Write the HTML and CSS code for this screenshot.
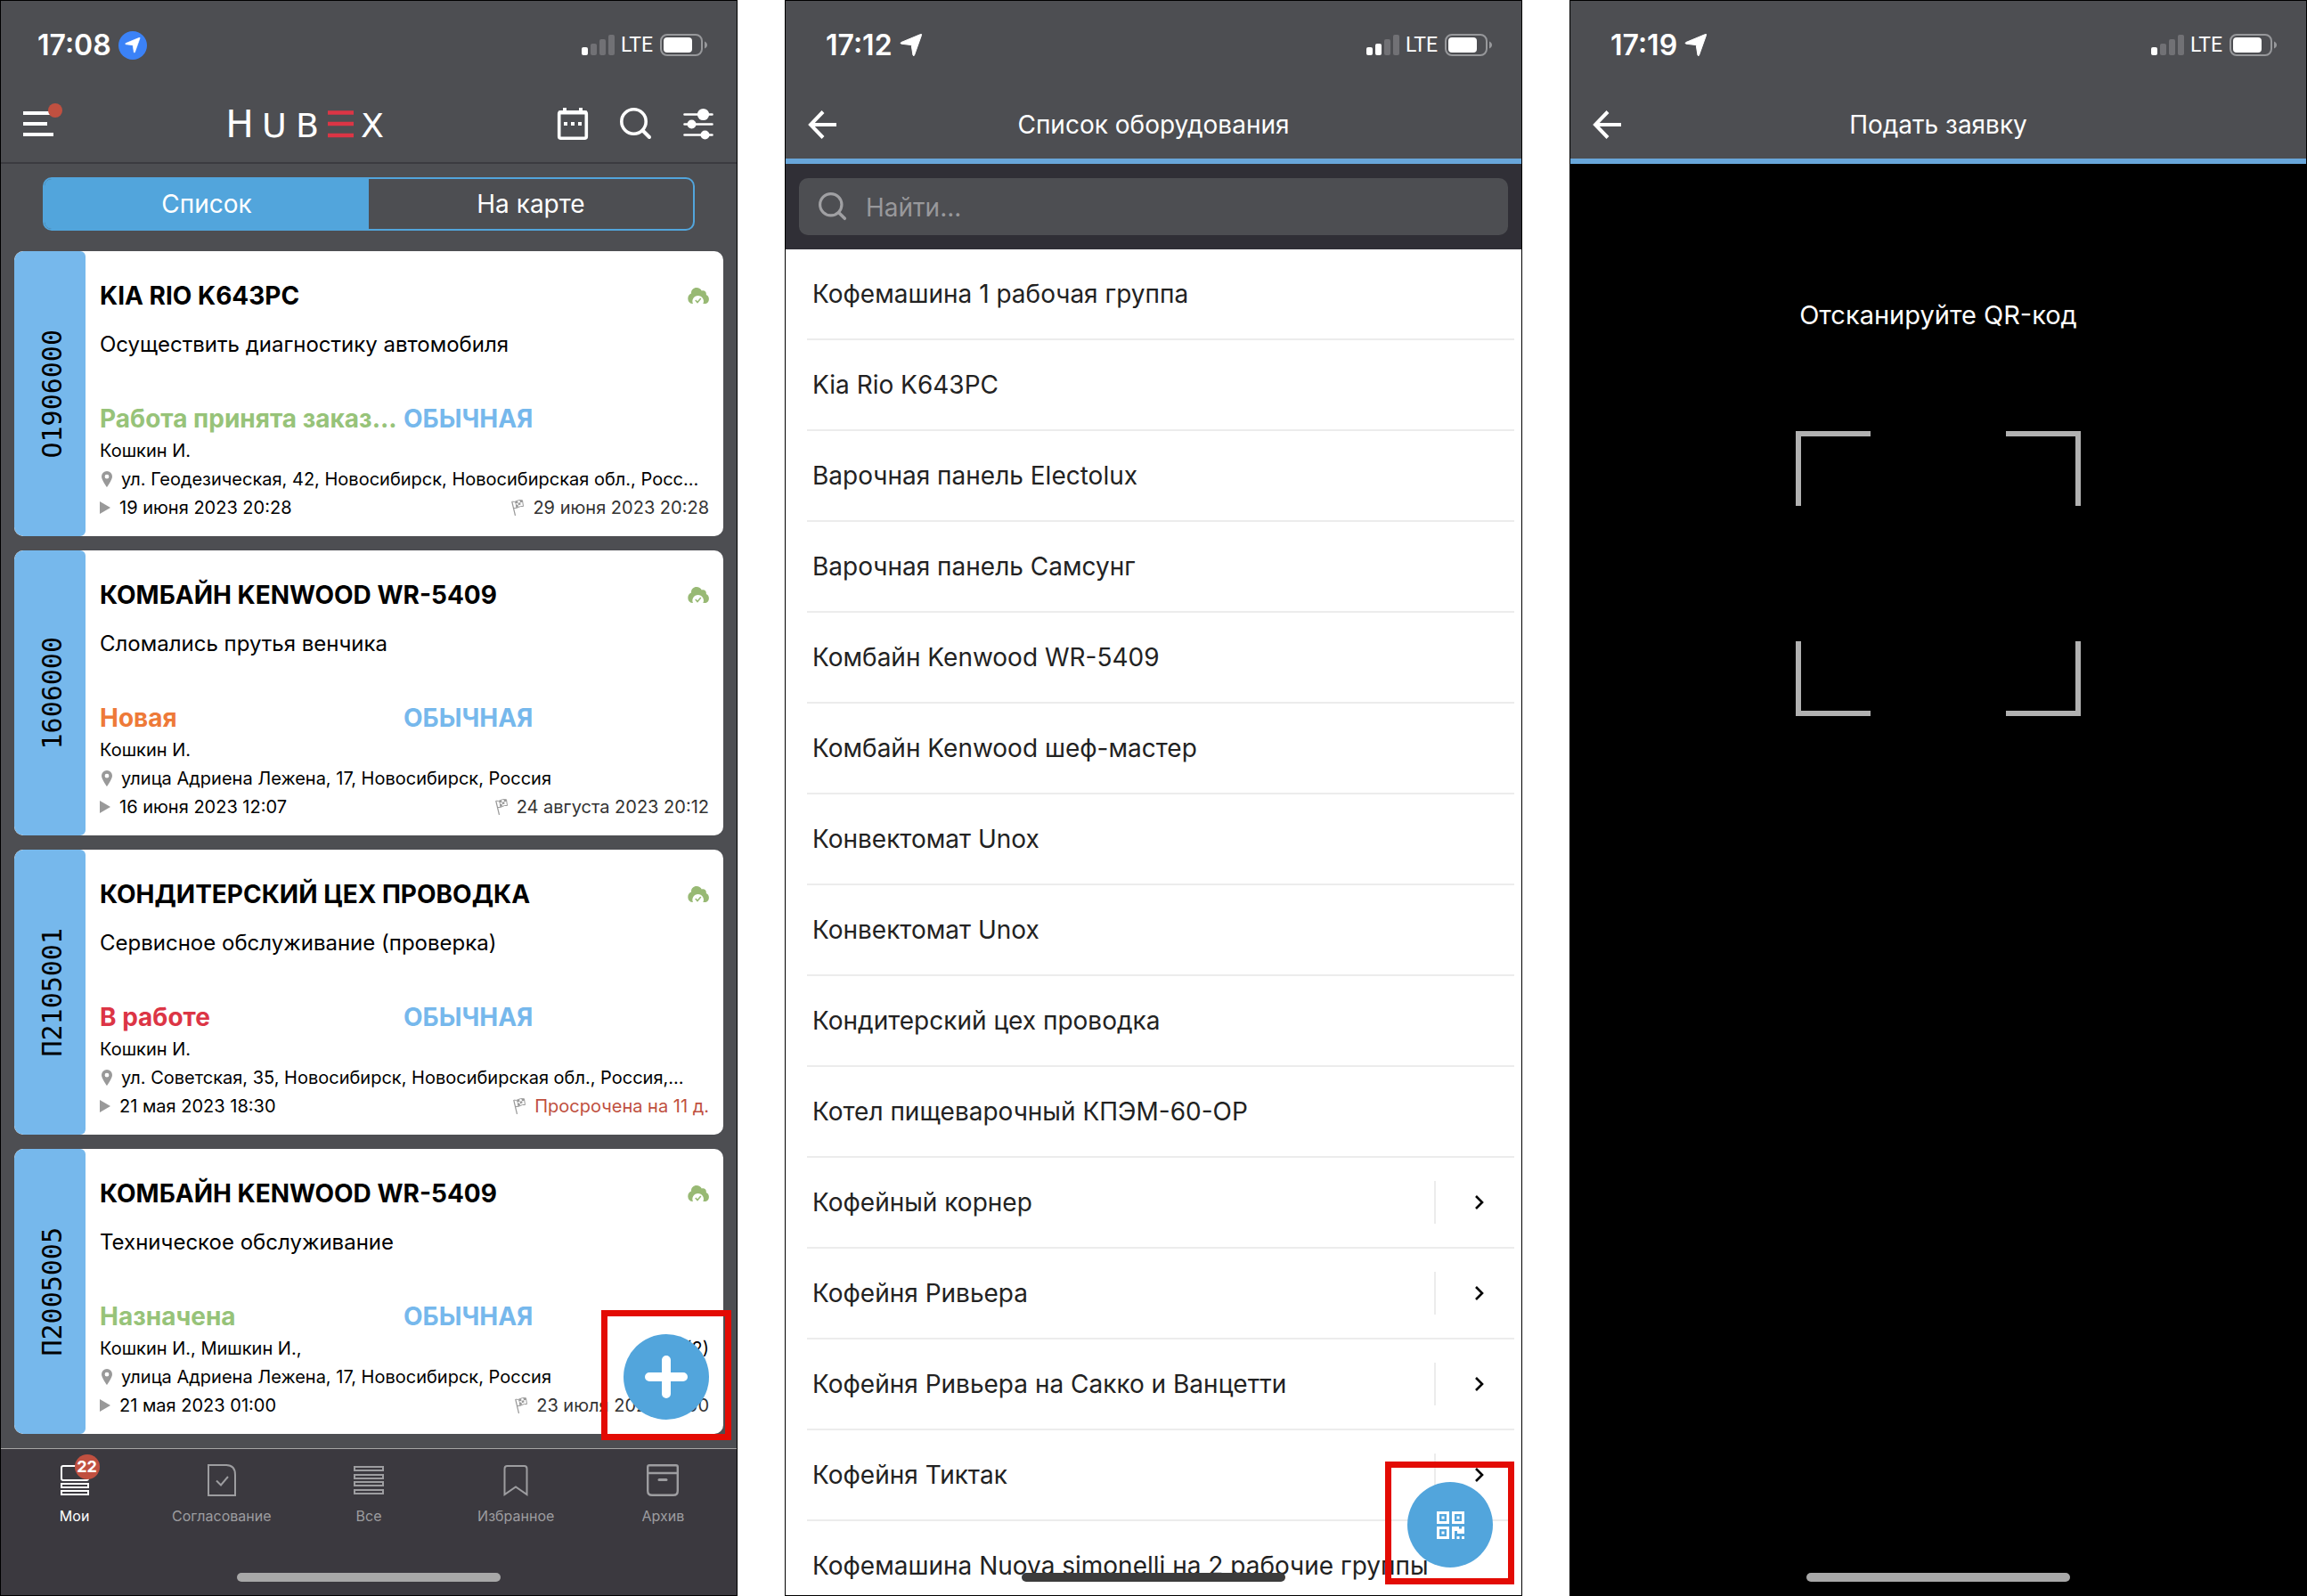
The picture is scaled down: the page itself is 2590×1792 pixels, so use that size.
FILE: index.html
```html
<!DOCTYPE html>
<html lang="ru">
<head>
<meta charset="utf-8">
<meta name="viewport" content="width=device-width, initial-scale=1">
<title>HubEx</title>
<link rel="stylesheet" href="styles.css">
</head>
<body>
<svg class="sprite" aria-hidden="true">
  <symbol id="i-arrow" viewBox="0 0 26 26"><path d="M24.500 1.500L16.500 24Q15.800 25.600 15 24L13.300 13.200Q13.200 12.600 12.600 12.500L2 11.200Q0 10.400 1.800 9.500L22.800 .8Q25.500 -.2 24.500 1.500Z" fill="currentColor" stroke="currentColor"/></symbol>
  <symbol id="i-battery" viewBox="0 0 54 26"><rect x="1" y="1" width="46" height="23" rx="7" fill="none" stroke="#97989b" stroke-width="2"/><rect x="4" y="4" width="32" height="17" rx="4" fill="#fff"/><path d="M50 8.500c4 1.500 4 6.500 0 8z" fill="#97989b"/></symbol>
  <symbol id="i-back" viewBox="0 0 32 32"><path d="M17 1.500L3 16l14 14.500M3 16h29" fill="none" stroke="currentColor" stroke-width="4"/></symbol>
  <symbol id="i-search" viewBox="0 0 36 36"><circle cx="15.500" cy="15.500" r="13.700" fill="none" stroke="currentColor" stroke-width="3.600"/><path d="M25.500 25.500l7.500 7.500" stroke="currentColor" stroke-width="4" stroke-linecap="round"/></symbol>
  <symbol id="i-cloud" viewBox="0 0 24 18"><path d="M6 18A5.500 5.500 0 0 1 .3 12.400C.2 9.500 2 7.300 4 6.600 3.600 2.800 6.400 0 10 0c2.600 0 4.700 1.400 5.800 3.500C18.400 2.400 21.500 4.400 20.800 8 22.800 8.800 24 10.600 23.900 13c0 2.500-1.400 4.300-3.400 5h-3.200a6.300 6.300 0 1 0-11.300 0z" fill="#98b974"/><path d="M8.800 14l2.200 2.500 3.800-4.500" fill="none" stroke="#98b974" stroke-width="1.600"/></symbol>
  <symbol id="i-pin" viewBox="0 0 12 18"><path d="M6 0a6 6 0 0 1 6 6c0 4-6 12-6 12S0 10 0 6a6 6 0 0 1 6-6zm0 3.800a2.400 2.400 0 1 0 0 4.800 2.400 2.400 0 0 0 0-4.800z" fill="#999"/></symbol>
  <symbol id="i-play" viewBox="0 0 12 14"><path d="M0 0l12 7-12 7z" fill="#999"/></symbol>
  <symbol id="i-flag" viewBox="0 0 14 18"><path d="M.7 2L4.500 18" stroke="#999" stroke-width="1.200"/><path d="M1.200 2.200Q4 3 6 1.500T12.500.8L13.500 7.500Q10 7 8 8.500T3 9.500" fill="none" stroke="#999"/><path d="M4 2.500l3-1 .5 2.300-3 .9zM9.500 1l3-.2.4 2-2.800.5zM7.500 3.800l2.600-.6.5 2.400-2.600.6zM4.800 5l2.700 1 .5 2.300-2.700.9z" fill="#999"/></symbol>
</svg>

<main class="board">
  <section class="phone phone--tasks">
    <div class="status">
      <span class="time">17:08</span>
      <span class="geo-badge"><svg width="18" height="18"><use href="#i-arrow"/></svg></span>
      <span class="signal"><i class="on"></i><i></i><i></i><i></i></span>
      <span class="lte">LTE</span>
      <svg class="battery" width="54" height="26"><use href="#i-battery"/></svg>
    </div>
    <header class="top top--main">
      <button class="icon-btn menu-btn" aria-label="Меню">
        <svg width="46" height="40" viewBox="0 0 46 40"><path d="M0 12h34M0 24h27M0 36h34" stroke="#fff" stroke-width="4"/><circle cx="36" cy="9" r="8" fill="#c05040"/></svg>
      </button>
      <svg class="logo" width="188" height="60" viewBox="-2 -12 188 60" role="img" aria-label="HubEx">
        <g class="logo-text" text-anchor="middle"><text class="logo-cap" x="17" y="33">H</text><text x="56" y="33">U</text><text x="93" y="33">B</text><text x="166" y="33">X</text></g>
        <path d="M116 5.500h29M116 18h29M116 31h29" stroke="#dc3545" stroke-width="4.600"/>
      </svg>
      <div class="tools">
        <button class="icon-btn" aria-label="Календарь"><svg width="36" height="38" viewBox="0 0 36 38"><rect x="2.700" y="5.700" width="30.600" height="29.600" rx="2" fill="none" stroke="#fff" stroke-width="3.600"/><path d="M9 1v5M27 1v5" stroke="#fff" stroke-width="4"/><path d="M2 6.500h32" stroke="#fff" stroke-width="4"/><path d="M8 19h4M16 19h4M24 19h4" stroke="#fff" stroke-width="4"/></svg></button>
        <button class="icon-btn" aria-label="Поиск"><svg width="36" height="36"><use href="#i-search"/></svg></button>
        <button class="icon-btn" aria-label="Фильтр"><svg width="34" height="36" viewBox="0 0 34 36"><path d="M1.500 7.500h31M1.500 18.500h31M1.500 30.500h31" stroke="#fff" stroke-width="2.600" stroke-linecap="round"/><g fill="#fff"><circle cx="22.500" cy="7.500" r="6.600"/><circle cx="9.500" cy="18.500" r="5"/><circle cx="24.500" cy="30.500" r="5"/></g></svg></button>
      </div>
    </header>
    <div class="tasks">
      <div class="segmented">
        <button class="seg seg--on">Список</button>
        <button class="seg">На карте</button>
      </div>
      <article class="card">
        <div class="card-id"><span>О1906000</span></div>
        <div class="card-body">
          <div class="card-head"><h2>KIA RIO K643PC</h2><svg width="24" height="18"><use href="#i-cloud"/></svg></div>
          <p class="desc">Осуществить диагностику автомобиля</p>
          <div class="state"><span class="green">Работа принята заказ...</span><span class="kind">ОБЫЧНАЯ</span></div>
          <div class="line"><span>Кошкин И.</span></div>
          <div class="line line--place"><svg width="12" height="18"><use href="#i-pin"/></svg><span>ул. Геодезическая, 42, Новосибирск, Новосибирская обл., Росс...</span></div>
          <div class="line line--dates"><svg width="12" height="14"><use href="#i-play"/></svg><span>19 июня 2023 20:28</span><span class="due"><svg width="14" height="18"><use href="#i-flag"/></svg>29 июня 2023 20:28</span></div>
        </div>
      </article>
      <article class="card">
        <div class="card-id"><span>1606000</span></div>
        <div class="card-body">
          <div class="card-head"><h2>КОМБАЙН KENWOOD WR-5409</h2><svg width="24" height="18"><use href="#i-cloud"/></svg></div>
          <p class="desc">Сломались прутья венчика</p>
          <div class="state"><span class="orange">Новая</span><span class="kind">ОБЫЧНАЯ</span></div>
          <div class="line"><span>Кошкин И.</span></div>
          <div class="line line--place"><svg width="12" height="18"><use href="#i-pin"/></svg><span>улица Адриена Лежена, 17, Новосибирск, Россия</span></div>
          <div class="line line--dates"><svg width="12" height="14"><use href="#i-play"/></svg><span>16 июня 2023 12:07</span><span class="due"><svg width="14" height="18"><use href="#i-flag"/></svg>24 августа 2023 20:12</span></div>
        </div>
      </article>
      <article class="card">
        <div class="card-id"><span>П2105001</span></div>
        <div class="card-body">
          <div class="card-head"><h2>КОНДИТЕРСКИЙ ЦЕХ ПРОВОДКА</h2><svg width="24" height="18"><use href="#i-cloud"/></svg></div>
          <p class="desc">Сервисное обслуживание (проверка)</p>
          <div class="state"><span class="red">В работе</span><span class="kind">ОБЫЧНАЯ</span></div>
          <div class="line"><span>Кошкин И.</span></div>
          <div class="line line--place"><svg width="12" height="18"><use href="#i-pin"/></svg><span>ул. Советская, 35, Новосибирск, Новосибирская обл., Россия,...</span></div>
          <div class="line line--dates"><svg width="12" height="14"><use href="#i-play"/></svg><span>21 мая 2023 18:30</span><span class="due due--late"><svg width="14" height="18"><use href="#i-flag"/></svg>Просрочена на 11 д.</span></div>
        </div>
      </article>
      <article class="card">
        <div class="card-id"><span>П2005005</span></div>
        <div class="card-body">
          <div class="card-head"><h2>КОМБАЙН KENWOOD WR-5409</h2><svg width="24" height="18"><use href="#i-cloud"/></svg></div>
          <p class="desc">Техническое обслуживание</p>
          <div class="state"><span class="green">Назначена</span><span class="kind">ОБЫЧНАЯ</span></div>
          <div class="line"><span>Кошкин И., Мишкин И.,</span><span class="more">(2)</span></div>
          <div class="line line--place"><svg width="12" height="18"><use href="#i-pin"/></svg><span>улица Адриена Лежена, 17, Новосибирск, Россия</span></div>
          <div class="line line--dates"><svg width="12" height="14"><use href="#i-play"/></svg><span>21 мая 2023 01:00</span><span class="due"><svg width="14" height="18"><use href="#i-flag"/></svg>23 июля 2023 01:00</span></div>
        </div>
      </article>
    </div>
    <nav class="tabs">
      <div class="tab-row">
        <a class="tab tab--on" href="#mine"><span class="tab-icon"><svg width="36" height="36" viewBox="0 0 36 36" fill="none" stroke="currentColor" stroke-width="2"><rect x="3" y="2" width="30" height="16" rx="2"/><path d="M3 22h30v4H3zM3 30h30v4H3z"/></svg><b class="badge">22</b></span>Мои</a>
        <a class="tab" href="#approve"><svg width="36" height="36" viewBox="0 0 36 36" fill="none" stroke="currentColor" stroke-width="2"><path d="M3 1h20q10 0 10 11v23H3z"/><path d="M12 18.500l5 5 8-9.500"/></svg>Согласование</a>
        <a class="tab" href="#all"><svg width="36" height="36" viewBox="0 0 36 36" fill="none" stroke="currentColor" stroke-width="2"><path d="M2 3h32v4H2zM2 12h32v4H2zM2 20h32v4H2zM2 29h32v4H2z"/></svg>Все</a>
        <a class="tab" href="#favorites"><svg width="36" height="36" viewBox="0 0 36 36" fill="none" stroke="currentColor" stroke-width="2"><path d="M5.500 34V5q0-3 3-3h19q3 0 3 3v29L18 25.500z"/></svg>Избранное</a>
        <a class="tab" href="#archive"><svg width="36" height="36" viewBox="0 0 36 36" fill="none" stroke="currentColor" stroke-width="2.400"><path d="M1.200 10V3q0-1.800 1.800-1.800h30q1.800 0 1.800 1.800v7zM1.200 10v20q0 4.800 4.800 4.800h24q4.800 0 4.800-4.800V10"/><path d="M14 17.500h8" stroke-width="3" stroke-linecap="round"/></svg>Архив</a>
      </div>
    </nav>
    <span class="home home--light"></span>
    <div class="mark mark--add"><button class="fab" aria-label="Добавить"><svg width="48" height="48" viewBox="0 0 48 48"><path d="M24 5v38M5 24h38" stroke="#fff" stroke-width="10" stroke-linecap="round"/></svg></button></div>
  </section>

  <section class="phone phone--list">
    <div class="status">
      <span class="time">17:12</span>
      <svg class="geo" width="26" height="26"><use href="#i-arrow"/></svg>
      <span class="signal"><i class="on"></i><i class="on"></i><i></i><i></i></span>
      <span class="lte">LTE</span>
      <svg class="battery" width="54" height="26"><use href="#i-battery"/></svg>
    </div>
    <header class="top top--page">
      <button class="icon-btn" aria-label="Назад"><svg width="32" height="32"><use href="#i-back"/></svg></button>
      <h1>Список оборудования</h1>
    </header>
    <div class="search">
      <label class="search-box"><svg width="32" height="32"><use href="#i-search"/></svg><input type="search" placeholder="Найти..." aria-label="Найти"></label>
    </div>
    <ul class="items">
      <li><a href="#1">Кофемашина 1 рабочая группа</a></li>
      <li><a href="#2">Kia Rio K643PC</a></li>
      <li><a href="#3">Варочная панель Electolux</a></li>
      <li><a href="#4">Варочная панель Самсунг</a></li>
      <li><a href="#5">Комбайн Kenwood WR-5409</a></li>
      <li><a href="#6">Комбайн Kenwood шеф-мастер</a></li>
      <li><a href="#7">Конвектомат Unox</a></li>
      <li><a href="#8">Конвектомат Unox</a></li>
      <li><a href="#9">Кондитерский цех проводка</a></li>
      <li><a href="#10">Котел пищеварочный КПЭМ-60-ОР</a></li>
      <li><a href="#11">Кофейный корнер</a><button class="open" aria-label="Открыть"><svg width="10" height="16" viewBox="0 0 10 16"><path d="M1 1l7 7-7 7" fill="none" stroke="#000" stroke-width="2.600"/></svg></button></li>
      <li><a href="#12">Кофейня Ривьера</a><button class="open" aria-label="Открыть"><svg width="10" height="16" viewBox="0 0 10 16"><path d="M1 1l7 7-7 7" fill="none" stroke="#000" stroke-width="2.600"/></svg></button></li>
      <li><a href="#13">Кофейня Ривьера на Сакко и Ванцетти</a><button class="open" aria-label="Открыть"><svg width="10" height="16" viewBox="0 0 10 16"><path d="M1 1l7 7-7 7" fill="none" stroke="#000" stroke-width="2.600"/></svg></button></li>
      <li><a href="#14">Кофейня Тиктак</a><button class="open" aria-label="Открыть"><svg width="10" height="16" viewBox="0 0 10 16"><path d="M1 1l7 7-7 7" fill="none" stroke="#000" stroke-width="2.600"/></svg></button></li>
      <li><a href="#15">Кофемашина Nuova simonelli на 2 рабочие группы</a></li>
    </ul>
    <span class="home home--dark"></span>
    <div class="mark mark--qr"><button class="fab" aria-label="Сканировать QR-код"><svg width="31" height="31" viewBox="0 0 31 31"><g fill="none" stroke="#fff" stroke-width="3"><path d="M1.500 1.500h11v11h-11zM18.500 1.500h11v11h-11zM1.500 18.500h11v11h-11z"/></g><path d="M5.500 5.500h3v3h-3zM22.500 5.500h3v3h-3zM5.500 22.500h3v3h-3zM17 17h8v2.500h3V17h3v8h-8v-3h-3v9h-3zM22.500 28h3v3h-3zM28 28h3v3h-3z" fill="#fff"/></svg></button></div>
  </section>

  <section class="phone phone--scan">
    <div class="status">
      <span class="time">17:19</span>
      <svg class="geo" width="26" height="26"><use href="#i-arrow"/></svg>
      <span class="signal"><i class="on"></i><i></i><i></i><i></i></span>
      <span class="lte">LTE</span>
      <svg class="battery" width="54" height="26"><use href="#i-battery"/></svg>
    </div>
    <header class="top top--page">
      <button class="icon-btn" aria-label="Назад"><svg width="32" height="32"><use href="#i-back"/></svg></button>
      <h1>Подать заявку</h1>
    </header>
    <div class="scan">
      <p>Отсканируйте QR-код</p>
      <svg width="320" height="320" viewBox="0 0 320 320"><path d="M3 84V3h81M236 3h81v81M317 236v81h-81M84 317H3v-81" fill="none" stroke="#b1b1b1" stroke-width="6"/></svg>
    </div>
    <span class="home home--light"></span>
  </section>
</main>
</body>
</html>
```
FILE: styles.css
```css
* {
  box-sizing: border-box;
}

body {
  margin: 0;
  background: #fff;
  font-family: Inter, "Liberation Sans", sans-serif;
  font-size: 28px;
}

h1, h2, p, ul {
  margin: 0;
  padding: 0;
  font-size: inherit;
  font-weight: inherit;
}

button {
  margin: 0;
  padding: 0;
  border: 0;
  background: none;
  color: inherit;
  font: inherit;
}

a {
  color: inherit;
  text-decoration: none;
}

svg {
  display: block;
  flex: none;
}

.sprite {
  position: absolute;
  width: 0;
  height: 0;
}

.board {
  display: grid;
  grid-template-columns: repeat(3, minmax(0, 1fr));
  gap: 53px;
}

.phone {
  position: relative;
  display: flex;
  flex-direction: column;
  height: 100vh;
  border: 1px solid #000;
  background: #4d4e52;
  overflow: hidden;
}

/* status bar */

.status {
  display: flex;
  flex: none;
  align-items: center;
  height: 99px;
  padding: 0 32px 0 45px;
  color: #fff;
}

.phone--tasks .status {
  padding-left: 41px;
}

.time {
  font-size: 32px;
  font-weight: 600;
}

.geo {
  margin-left: 8px;
}

.geo-badge {
  display: flex;
  align-items: center;
  justify-content: center;
  width: 32px;
  height: 32px;
  margin-left: 8px;
  border-radius: 50%;
  background: #3b82f7;
}

.signal {
  display: flex;
  align-items: flex-end;
  gap: 3px;
  margin-left: auto;
}

.signal i {
  width: 7px;
  height: 9px;
  border-radius: 2px;
  background: #717175;
}

.signal i:nth-child(2) {
  height: 13px;
}

.signal i:nth-child(3) {
  height: 18px;
}

.signal i:nth-child(4) {
  height: 23px;
}

.signal .on {
  background: #fff;
}

.lte {
  margin-left: 7px;
  font: 400 23px Roboto, sans-serif;
}

.battery {
  margin-left: 8px;
}

/* title bars */

.top {
  display: flex;
  flex: none;
  align-items: center;
  color: #fff;
}

.top--main {
  height: 84px;
  padding: 0 26px 4px 25px;
  border-bottom: 2px solid #3b3b40;
}

.top--page {
  display: grid;
  grid-template-columns: 32px 1fr 32px;
  height: 84px;
  padding: 2px 25px 0;
  border-bottom: 6px solid #68a6da;
}

.top--page h1 {
  text-align: center;
}

.menu-btn {
  width: 224px;
}

.menu-btn svg {
  margin-bottom: 8px;
}

.logo-text {
  fill: #fff;
  font-family: "DejaVu Sans", sans-serif;
  font-size: 38px;
}

.logo-cap {
  font-size: 42px;
}

.tools {
  display: flex;
  align-items: center;
  gap: 35px;
  margin-left: auto;
}

/* tasks */

.tasks {
  display: flex;
  flex: 1;
  flex-direction: column;
  gap: 16px;
  min-height: 0;
  padding: 15px 15px 16px;
  overflow: hidden;
}

.segmented {
  display: grid;
  flex: none;
  grid-template-columns: 1fr 1fr;
  height: 60px;
  margin: 0 32px 7px;
  border: 2px solid #52a5dc;
  border-radius: 10px;
  overflow: hidden;
  color: #fff;
}

.seg--on {
  background: #52a5dc;
}

.card {
  display: flex;
  flex: none;
  border-radius: 10px;
  background: #fff;
  color: #000;
  overflow: hidden;
}

.card-id {
  display: flex;
  flex: none;
  align-items: center;
  justify-content: center;
  width: 80px;
  padding-left: 6px;
  border-radius: 10px 6px 6px 10px;
  background: #76b8ec;
  font: 30px/36px "DejaVu Sans Mono", monospace;
}

.card-id span {
  writing-mode: vertical-rl;
  transform: rotate(180deg);
}

.card-body {
  flex: 1;
  min-width: 0;
  padding: 32px 16px 16px;
  white-space: nowrap;
}

.card-head {
  display: flex;
  align-items: center;
  justify-content: space-between;
  line-height: 36px;
}

.card-head h2 {
  font-weight: 700;
}

.desc {
  margin-top: 21px;
  font-size: 24px;
  line-height: 32px;
}

.state {
  display: grid;
  grid-template-columns: 341px 1fr;
  margin: 49px 0 2px;
  font-weight: 700;
  line-height: 36px;
}

.green {
  color: #97c379;
}

.orange {
  color: #ee7a38;
}

.red {
  color: #dc3545;
}

.kind {
  color: #76b8ec;
}

.line {
  display: flex;
  align-items: center;
  font-size: 20px;
  line-height: 32px;
}

.line--place {
  gap: 10px;
  padding-left: 2px;
}

.line--dates {
  gap: 10px;
}

.more {
  margin-left: auto;
}

.due {
  display: flex;
  align-items: center;
  gap: 10px;
  margin-left: auto;
  color: #333;
}

.due--late {
  color: #c05040;
}

/* bottom navigation */

.tabs {
  flex: none;
  height: 165px;
  border-top: 1px solid #a5a5a5;
  background: #3b393f;
}

.tab-row {
  display: grid;
  grid-template-columns: repeat(5, 1fr);
  padding-top: 17px;
}

.tab {
  display: flex;
  flex-direction: column;
  align-items: center;
  gap: 12px;
  color: #9d9da0;
  font-size: 16px;
  line-height: 20px;
}

.tab--on {
  color: #fff;
}

.tab-icon {
  position: relative;
}

.badge {
  position: absolute;
  top: -11px;
  right: -10px;
  width: 28px;
  height: 28px;
  border-radius: 50%;
  background: #c05040;
  font-size: 18px;
  line-height: 28px;
  text-align: center;
}

.home {
  position: absolute;
  bottom: 15px;
  left: 50%;
  width: 296px;
  height: 10px;
  margin-left: -148px;
  border-radius: 5px;
}

.home--light {
  background: #a8a8a8;
}

.home--dark {
  background: #3c3c3c;
}

/* floating buttons with their highlight frames */

.mark {
  position: absolute;
  border: 7px solid #e30b04;
}

.mark--add {
  right: 6px;
  bottom: 174px;
  padding: 20px 18px 16px;
}

.mark--qr {
  right: 8px;
  bottom: 12px;
  padding: 16px 17px 12px 18px;
}

.fab {
  display: flex;
  align-items: center;
  justify-content: center;
  width: 96px;
  height: 96px;
  border-radius: 50%;
  background: #52a5dc;
}

/* equipment list */

.phone--list {
  background: #fff;
}

.phone--list .status,
.phone--list .top {
  background: #4d4e52;
}

.search {
  flex: none;
  padding: 16px 15px;
  background: #302f36;
}

.search-box {
  display: flex;
  align-items: center;
  gap: 21px;
  height: 64px;
  padding: 0 22px;
  border-radius: 10px;
  background: #4d4e52;
  color: #a0a0a3;
}

.search-box input {
  flex: 1;
  min-width: 0;
  padding: 2px 0 0;
  border: 0;
  outline: 0;
  background: none;
  color: #fff;
  font: inherit;
}

.search-box input::placeholder {
  color: #98989b;
  opacity: 1;
}

.items {
  flex: 1;
  min-height: 0;
  padding: 0 8px 0 24px;
  color: #222;
  list-style: none;
  overflow: hidden;
}

.items li {
  display: flex;
  align-items: center;
  justify-content: space-between;
  height: 102px;
  padding-left: 6px;
  border-bottom: 2px solid #ececec;
}

.items a {
  white-space: nowrap;
}

.open {
  display: flex;
  align-items: center;
  width: 90px;
  height: 48px;
  padding-left: 44px;
  border-left: 2px solid #ececec;
}

/* scanner */

.scan {
  display: flex;
  flex: 1;
  flex-direction: column;
  align-items: center;
  gap: 110px;
  padding-top: 150px;
  background: #000;
  color: #fff;
  font-size: 29px;
  line-height: 40px;
}
```
